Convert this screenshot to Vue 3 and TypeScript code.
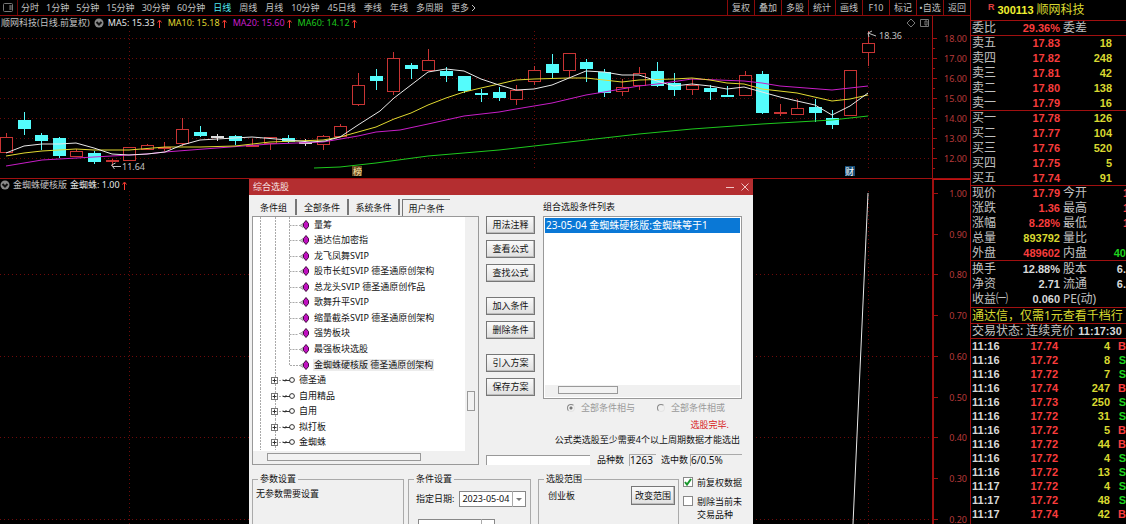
<script setup lang="ts">
import { ref } from 'vue'

type Kind = 'up' | 'down' | 'flat'
type Candle = [x: number, high: number, top: number, bottom: number, low: number, kind: Kind]

const intraday = ['分时', '1分钟', '5分钟', '15分钟', '30分钟', '60分钟']
const periods = ['日线', '周线', '月线', '10分钟', '45日线', '季线', '年线', '多周期']
const tools = ['复权', '叠加', '多股', '统计', '画线', 'F10', '标记', '•自选', '返回']

const averages = [
  { name: 'MA5: 15.33', cls: 'ma5' },
  { name: 'MA10: 15.18', cls: 'ma10' },
  { name: 'MA20: 15.60', cls: 'ma20' },
  { name: 'MA60: 14.12', cls: 'ma60' },
]

const candles: Candle[] = [
  [6, 133, 137, 153, 153, 'up'], [24, 112, 120, 129, 135, 'down'], [41, 133, 135, 141, 150, 'down'],
  [59, 137, 138, 156, 158, 'down'], [76, 149, 151, 157, 157, 'up'], [94, 151, 153, 162, 164, 'down'],
  [112, 159, 160, 161, 166, 'up'], [129, 147, 147, 161, 161, 'up'], [147, 144, 145, 150, 150, 'up'],
  [164, 142, 147, 148, 151, 'up'], [182, 118, 129, 144, 146, 'up'], [200, 126, 132, 136, 137, 'down'],
  [217, 134, 136, 137, 141, 'flat'], [235, 135, 136, 141, 145, 'down'], [252, 139, 145, 146, 146, 'up'],
  [270, 137, 137, 144, 150, 'up'], [288, 135, 138, 142, 143, 'down'], [305, 139, 142, 142, 146, 'flat'],
  [323, 135, 136, 145, 150, 'up'], [340, 124, 126, 137, 137, 'up'], [358, 73, 85, 105, 106, 'up'],
  [376, 69, 76, 81, 90, 'down'], [393, 52, 58, 92, 95, 'up'], [411, 63, 65, 69, 79, 'down'],
  [428, 49, 60, 71, 71, 'up'], [446, 67, 71, 76, 82, 'down'], [464, 76, 76, 91, 93, 'down'],
  [481, 89, 93, 95, 102, 'down'], [499, 87, 92, 98, 101, 'down'], [516, 85, 90, 100, 105, 'up'],
  [534, 66, 70, 82, 85, 'up'], [552, 54, 64, 73, 78, 'down'], [569, 53, 53, 71, 77, 'up'],
  [586, 59, 62, 69, 82, 'down'], [604, 69, 72, 93, 97, 'down'], [622, 79, 87, 92, 96, 'up'],
  [639, 67, 73, 86, 90, 'up'], [657, 62, 71, 86, 87, 'down'], [674, 73, 83, 90, 96, 'down'],
  [692, 79, 85, 90, 95, 'up'], [710, 85, 88, 92, 100, 'down'], [727, 86, 95, 96, 97, 'down'],
  [745, 71, 75, 96, 96, 'up'], [762, 71, 74, 113, 114, 'down'], [780, 104, 112, 114, 116, 'up'],
  [797, 99, 108, 115, 115, 'up'], [815, 99, 107, 113, 122, 'down'], [832, 110, 118, 125, 129, 'down'],
  [850, 70, 70, 116, 116, 'up'], [868, 31, 43, 53, 66, 'up'],
]

const lines = [
  { cls: 'ma20', pts: '6,166 24,163 42,160 94,157 147,154 165,152 217,148 270,144 323,142 358,136 376,132 400,130 428,124 464,116 499,112 516,109 552,103 586,95 604,92 639,86 657,84 692,79 744,81 762,83 780,86 832,90 868,86' },
  { cls: 'ma60', pts: '314,168 340,167 358,165 376,163 428,156 499,150 569,142 639,134 692,129 762,124 832,120 850,118 868,116' },
  { cls: 'ma10', pts: '6,156 24,153 42,151 76,149 94,150 129,150 165,147 200,147 235,146 270,142 323,140 340,137 358,132 376,127 394,119 411,113 428,105 446,98 464,92 481,88 499,84 516,80 534,79 569,78 586,78 604,80 622,82 639,80 674,79 692,78 710,80 727,83 744,84 762,89 797,93 832,101 850,99 868,95' },
  { cls: 'ma5', pts: '6,153 24,146 42,144 59,144 76,143 94,148 112,154 129,155 147,154 165,152 182,145 200,140 217,139 252,137 288,140 310,142 325,141 340,137 358,125 380,111 394,98 411,85 428,72 446,69 464,71 481,79 499,85 516,90 534,89 552,85 569,78 586,71 604,72 622,75 639,75 657,81 674,86 692,84 710,86 727,89 744,87 762,92 780,97 797,101 815,105 832,115 850,106 868,93' },
]

const priceAxis: [number, string][] = [
  [38, '18.00'], [58, '17.00'], [78, '16.00'], [98, '15.00'], [118, '14.00'], [138, '13.00'], [158, '12.00'],
]
const signalAxis: [number, string][] = [
  [193, '1.00'], [234, '0.90'], [274, '0.80'], [315, '0.70'], [356, '0.60'], [397, '0.50'], [437, '0.40'], [478, '0.30'], [519, '0.20'],
]
const signalGrid = signalAxis.filter((_, i) => i > 0 && i % 2 === 0)
const verticals = [129, 534, 868]

const sells = [['卖五', '17.83', '18'], ['卖四', '17.82', '248'], ['卖三', '17.81', '42'], ['卖二', '17.80', '138'], ['卖一', '17.79', '16']]
const buys = [['买一', '17.78', '126'], ['买二', '17.77', '104'], ['买三', '17.76', '520'], ['买四', '17.75', '5'], ['买五', '17.74', '91']]
const quotes = [
  ['现价', '17.79', 'red', '今开', '1', 'red cut'],
  ['涨跌', '1.36', 'red', '最高', '1', 'red cut'],
  ['涨幅', '8.28%', 'red', '最低', '1', 'red cut'],
  ['总量', '893792', 'yellow', '量比', '', ''],
  ['外盘', '489602', 'red', '内盘', '40', 'green'],
]
const basics = [
  ['换手', '12.88%', 'white', '股本', '6.', 'white'],
  ['净资', '2.71', 'white', '流通', '6.', 'white'],
  ['收益㈠', '0.060', 'white', 'PE(动)', '', ''],
]
const ticks = [
  ['11:16', '17.74', '4', 'B'], ['11:16', '17.72', '8', 'S'], ['11:16', '17.72', '7', 'S'], ['11:16', '17.74', '247', 'B'],
  ['11:16', '17.73', '250', 'S'], ['11:16', '17.72', '31', 'S'], ['11:16', '17.72', '5', 'B'], ['11:16', '17.72', '44', 'B'],
  ['11:16', '17.72', '4', 'S'], ['11:16', '17.72', '13', 'S'], ['11:17', '17.72', '4', 'S'], ['11:17', '17.72', '48', 'S'],
  ['11:17', '17.74', '42', 'B'],
]

const tabs = ['条件组', '全部条件', '系统条件', '用户条件']
const activeTab = ref('用户条件')
const leaves = [
  '量筹', '通达信加密指', '龙飞凤舞SVIP', '股市长虹SVIP 德圣通原创架构', '总龙头SVIP 德圣通原创作品',
  '歌舞升平SVIP', '缩量截杀SVIP 德圣通原创架构', '强势板块', '最强板块选股', '金蜘蛛硬核版 德圣通原创架构',
]
const selectedLeaf = ref('金蜘蛛硬核版 德圣通原创架构')
const folders = ['德圣通', '自用精品', '自用', '拟打板', '金蜘蛛']
const actionGroups = [['用法注释', '查看公式', '查找公式'], ['加入条件', '删除条件'], ['引入方案', '保存方案']]
const adjusted = ref(true)
const excluded = ref(false)
</script>

<template>
  <div class="app">
    <main class="main">
      <nav class="toolbar">
        <button class="panel-btn" aria-label="侧栏">
          <svg width="11" height="10" viewBox="0 0 11 10"><rect x="0.5" y="0.5" width="9" height="8" rx="1" /><path d="M7 2v5M8 2v5" /></svg>
        </button>
        <div class="group tight">
          <button v-for="p in intraday" :key="p">{{ p }}</button>
        </div>
        <div class="group">
          <button v-for="p in periods" :key="p" :class="{ current: p === '日线' }">{{ p }}</button>
          <button class="more">更多
            <svg width="5" height="8" viewBox="0 0 5 8"><path d="M1 1l3 3-3 3" /></svg>
          </button>
        </div>
        <div class="tools">
          <button v-for="t in tools" :key="t">{{ t }}</button>
        </div>
      </nav>

      <section class="panel price">
        <div class="plot">
          <header class="info">
            <span>顺网科技(日线.前复权)</span>
            <svg class="drop" width="10" height="10" viewBox="0 0 10 10"><circle cx="5" cy="5" r="4.5" /><path d="M2.500 4l2.500 2.500L7.500 4" /></svg>
            <span v-for="m in averages" :key="m.name" class="avg" :class="m.cls">{{ m.name
              }}<svg class="rise" width="5" height="9" viewBox="0 0 5 9"><path d="M2.500 9V2M0.500 3.500L2.500 1l2 2.500" /></svg></span>
            <span class="corner">
              <svg width="24" height="10" viewBox="0 0 24 10"><path d="M5 1l4 4-4 4-4-4zM14.500 1.500h8v7h-8z" /><path d="M19 3h2v4h-2z" /></svg>
            </span>
          </header>
          <svg class="canvas" width="100%" height="147">
            <g transform="translate(0 -31)">
              <g class="grid">
                <line v-for="[y] in priceAxis" :key="y" x1="0" :y1="y + 0.5" x2="100%" :y2="y + 0.5" />
                <line v-for="x in verticals" :key="x" :x1="x + 0.5" y1="31" :x2="x + 0.5" y2="168" />
              </g>
              <g v-for="[x, hi, top, bot, lo, kind] in candles" :key="x" class="candle" :class="kind">
                <line :x1="x + 0.5" :y1="hi" :x2="x + 0.5" :y2="top" />
                <line :x1="x + 0.5" :y1="bot" :x2="x + 0.5" :y2="lo" />
                <rect :x="x - 5.5" :y="top + 0.5" width="12" :height="Math.max(bot - top - 1, 1)" />
              </g>
              <polyline v-for="l in lines" :key="l.cls" class="line" :class="l.cls" :points="l.pts" />
              <path class="mark" d="M121 166.500h-8M115.500 163l-4 2 3 4" />
              <text x="122" y="170">11.64</text>
              <path class="mark" d="M876 36l-8-3M872 31l-4 2 1 4" />
              <text x="879" y="39">18.36</text>
              <rect x="352" y="166" width="10" height="10" fill="#6a4a20" />
              <text x="353" y="175" class="badge gold">榜</text>
              <rect x="845" y="166" width="10" height="10" fill="#164e78" />
              <text x="845" y="175" class="badge">财</text>
            </g>
          </svg>
        </div>
        <svg class="axis" width="38" height="162">
          <g transform="translate(0 -16)">
            <template v-for="[y, label] in priceAxis" :key="y">
              <path :d="`M0 ${y + 0.5}h4M0 ${y + 10.5}h2`" />
              <text x="34" :y="y + 4">{{ label }}</text>
            </template>
          </g>
        </svg>
      </section>

      <section class="panel signal">
        <div class="plot">
          <header class="info">
            <svg class="drop" width="10" height="10" viewBox="0 0 10 10"><circle cx="5" cy="5" r="4.5" /><path d="M2.500 4l2.500 2.500L7.500 4" /></svg>
            <span>金蜘蛛硬核版</span>
            <span class="avg ma5">金蜘蛛: 1.00<svg class="rise" width="5" height="9" viewBox="0 0 5 9"><path d="M2.500 9V2M0.500 3.500L2.500 1l2 2.500" /></svg></span>
          </header>
          <svg class="canvas" width="100%" height="333">
            <g transform="translate(0 -191)">
              <g class="grid">
                <line v-for="[y] in signalGrid" :key="y" x1="0" :y1="y + 0.5" x2="100%" :y2="y + 0.5" />
                <line v-for="x in verticals" :key="x" :x1="x + 0.5" y1="191" :x2="x + 0.5" y2="524" />
              </g>
              <polyline class="line ma5" points="853,524 868,193" />
            </g>
          </svg>
        </div>
        <svg class="axis" width="38" height="345">
          <g transform="translate(0 -180)">
            <template v-for="[y, label] in signalAxis" :key="y">
              <path :d="`M0 ${y + 0.5}h4`" />
              <text x="33" :y="y + 4">{{ label }}</text>
            </template>
          </g>
        </svg>
      </section>
    </main>

    <aside class="side">
      <h1 class="stock"><sup>R</sup><b>300113</b><span>顺网科技</span></h1>
      <div class="block one">
        <div class="quote"><span>委比</span><b class="red">29.36%</b><span>委差</span></div>
      </div>
      <div v-for="(book, i) in [sells, buys]" :key="i" class="block five">
        <div v-for="r in book" :key="r[0]" class="quote book">
          <span>{{ r[0] }}</span><b class="red">{{ r[1] }}</b><b class="yellow">{{ r[2] }}</b>
        </div>
      </div>
      <div class="block five">
        <div v-for="r in quotes" :key="r[0]" class="quote">
          <span>{{ r[0] }}</span><b :class="r[2]">{{ r[1] }}</b><span>{{ r[3] }}</span><b :class="r[5]">{{ r[4] }}</b>
        </div>
      </div>
      <div class="block three">
        <div v-for="r in basics" :key="r[0]" class="quote">
          <span>{{ r[0] }}</span><b :class="r[2]">{{ r[1] }}</b><span>{{ r[3] }}</span><b :class="r[5]">{{ r[4] }}</b>
        </div>
      </div>
      <a class="block promo" href="#">通达信，仅需1元查看千档行</a>
      <p class="block state">交易状态: 连续竞价 <b>11:17:30</b></p>
      <table class="ticks">
        <tbody>
          <tr v-for="(t, i) in ticks" :key="i">
            <td class="white">{{ t[0] }}</td>
            <td class="red">{{ t[1] }}</td>
            <td class="yellow">{{ t[2] }}</td>
            <td :class="t[3] === 'B' ? 'red' : 'green'">{{ t[3] }}</td>
          </tr>
        </tbody>
      </table>
    </aside>

    <div class="dialog" role="dialog" aria-labelledby="dialog-title">
      <header class="title">
        <h2 id="dialog-title">综合选股</h2>
        <button aria-label="最小化"><svg width="8" height="8" viewBox="0 0 8 8"><path d="M0 4.500h8" /></svg></button>
        <button aria-label="关闭"><svg width="8" height="8" viewBox="0 0 8 8"><path d="M0.500 0.500l7 7M7.500 0.500l-7 7" /></svg></button>
      </header>

      <div class="upper">
        <div class="picker">
          <div class="tabs" role="tablist">
            <button v-for="t in tabs" :key="t" role="tab" :aria-selected="t === activeTab" :class="{ active: t === activeTab }" @click="activeTab = t">{{ t }}</button>
          </div>
          <div class="tree-box">
            <ul class="tree">
              <li v-for="l in leaves" :key="l" class="leaf" @click="selectedLeaf = l">
                <svg width="48" height="16" viewBox="0 0 48 16">
                  <path class="dots" :d="l === leaves[9] ? 'M7.500 0v16M22.500 0v16M36.500 0v8.500h9' : 'M7.500 0v16M22.500 0v16M36.500 0v16M36.500 8.500h9'" />
                </svg>
                <svg width="12" height="10" viewBox="0 0 12 10">
                  <path class="stub" d="M-2 5.500h2M-1 5.500l3-2v4z" />
                  <path class="gem" d="M5 0.500l2.500 3v3L5 9.500l-2.500-3v-3z" />
                </svg>
                <span :class="{ selected: l === selectedLeaf }">{{ l }}</span>
              </li>
              <li v-for="f in folders" :key="f" class="folder">
                <svg width="43" height="16" viewBox="0 0 43 16">
                  <path class="dots" d="M7.500 0v16M22.500 0v16M26 8.500h5" />
                  <rect class="box" x="18.500" y="5.500" width="6" height="6" />
                  <path class="plus" d="M19.500 8.500h4M21.500 6.500v4" />
                  <path class="key" d="M30 8.500h7M30 7.500l2 2M33 7v2" />
                  <circle class="key" cx="39" cy="8" r="2.400" />
                </svg>
                <span>{{ f }}</span>
              </li>
            </ul>
            <div class="vbar"><i></i></div>
            <div class="hbar"><i></i></div>
          </div>
        </div>

        <div class="compose">
          <div class="compose-row">
            <div class="actions">
              <div v-for="(g, i) in actionGroups" :key="i">
                <button v-for="a in g" :key="a" class="btn">{{ a }}</button>
              </div>
            </div>
            <div class="conditions">
              <h3>组合选股条件列表</h3>
              <div class="listbox">
                <div class="item">23-05-04 金蜘蛛硬核版:金蜘蛛等于1</div>
                <div class="list-bar"><i></i></div>
              </div>
              <div class="radios">
                <label><input type="radio" name="join" checked disabled />全部条件相与</label>
                <label><input type="radio" name="join" disabled />全部条件相或</label>
              </div>
              <p class="done">选股完毕.</p>
              <p class="hint">公式类选股至少需要4个以上周期数据才能选出</p>
            </div>
          </div>
          <div class="counts">
            <div class="progress"></div>
            <span>品种数</span><output>1263</output>
            <span>选中数</span><output class="wide">6/0.5%</output>
          </div>
        </div>
      </div>

      <div class="lower">
        <fieldset class="params">
          <legend>参数设置</legend>
          <p>无参数需要设置</p>
        </fieldset>
        <fieldset class="setup">
          <legend>条件设置</legend>
          <div class="date">
            <label for="date">指定日期:</label>
            <span class="combo"><select id="date"><option>2023-05-04</option></select></span>
          </div>
          <span class="combo period"><select aria-label="周期"><option></option></select></span>
        </fieldset>
        <fieldset class="range">
          <legend>选股范围</legend>
          <div><span>创业板</span><button class="btn">改变范围</button></div>
        </fieldset>
        <div class="checks">
          <label><input v-model="adjusted" type="checkbox" /><svg width="10" height="10" viewBox="0 0 10 10"><path v-if="adjusted" d="M2 5l2 2.500L8 2" /></svg><span>前复权数据</span></label>
          <label><input v-model="excluded" type="checkbox" /><svg width="10" height="10" viewBox="0 0 10 10"><path v-if="excluded" d="M2 5l2 2.500L8 2" /></svg><span>剔除当前未<br />交易品种</span></label>
        </div>
      </div>
    </div>
  </div>
</template>

<style>
body {
  margin: 0;
  background: #000;
}
</style>

<style scoped>
* {
  box-sizing: border-box;
}
.app {
  position: relative;
  display: flex;
  height: 100vh;
  overflow: hidden;
  background: #000;
  color: #c0c0c0;
  font: 9px/12px "Noto Sans", "Noto Sans CJK SC", sans-serif;
  white-space: nowrap;
}
button {
  padding: 0;
  border: 0;
  background: none;
  color: inherit;
  font: inherit;
}
h1, h2, h3, p, ul {
  margin: 0;
  padding: 0;
  font-weight: 400;
  font-size: inherit;
  list-style: none;
}
svg {
  display: block;
  flex: none;
}
.main {
  flex: 1;
  min-width: 0;
  display: flex;
  flex-direction: column;
}
.toolbar {
  display: flex;
  height: 16px;
  border-bottom: 1px solid #8c0a0a;
}
.panel-btn {
  width: 18px;
  padding-left: 3px;
  border-right: 1px solid #6a0808;
}
.panel-btn svg {
  fill: none;
  stroke: #777;
}
.group {
  display: flex;
  gap: 8px;
  margin-left: 8px;
}
.group.tight {
  gap: 7px;
  margin-left: 3px;
}
.current {
  color: #4fe6f0;
}
.more {
  display: flex;
  align-items: center;
  gap: 2px;
}
.more svg {
  fill: none;
  stroke: #c0c0c0;
}
.tools {
  display: flex;
  margin-left: auto;
}
.tools button {
  width: 27px;
  border-left: 1px solid #8c0a0a;
}
.panel {
  display: flex;
}
.price {
  height: 163px;
  border-bottom: 1px solid #a01010;
}
.signal {
  flex: 1;
}
.plot {
  flex: 1;
  min-width: 0;
}
.info {
  display: flex;
  align-items: center;
  gap: 4px;
  height: 14px;
  margin-bottom: 1px;
  padding-left: 1px;
}
.signal .info {
  height: 12px;
  margin-bottom: 0;
  gap: 3px;
  padding-left: 0;
}
.drop circle {
  fill: #8a8a8a;
}
.drop path {
  fill: none;
  stroke: #111;
  stroke-width: 2;
}
.avg {
  display: flex;
  align-items: center;
  gap: 2px;
  margin-right: 2px;
}
.rise {
  fill: none;
  stroke: #ff3c32;
}
.corner {
  margin-left: auto;
  margin-right: 2px;
}
.corner path {
  fill: none;
  stroke: #777;
}
.ma5 { color: #e8e8e8; stroke: #e8e8e8; }
.ma10 { color: #e0d830; stroke: #e0d830; }
.ma20 { color: #c81ec8; stroke: #c81ec8; }
.ma60 { color: #1ec81e; stroke: #1ec81e; }
.avg .rise {
  stroke: #ff3c32;
}
.canvas {
  overflow: visible;
}
.canvas text {
  stroke: none;
  fill: #c0c0c0;
}
.line {
  fill: none;
  stroke-width: 1;
}
.grid line {
  stroke: #6e0a0a;
  stroke-dasharray: 1 3;
}
.candle {
  shape-rendering: crispEdges;
}
.up { stroke: #c83434; fill: #000; }
.down { stroke: #54fcfc; fill: #54fcfc; }
.flat { stroke: #ddd; fill: none; }
.mark {
  fill: none;
  stroke: #c0c0c0;
}
.canvas .badge {
  fill: #fff;
}
.canvas .gold {
  fill: #ffe9a8;
}
.axis {
  border-left: 1px solid #a01010;
}
.signal .axis {
  border-top: 1px solid #c01010;
  border-left: 2px solid #a01010;
}
.axis text {
  fill: #b83a3a;
  text-anchor: end;
}
.axis path {
  stroke: #a01010;
}

.side {
  flex: none;
  width: 156px;
  border-left: 1px solid #a01010;
  overflow: hidden;
  font-size: 12px;
  line-height: 14px;
}
.side b,
.ticks {
  font: bold 11px/14px "Liberation Sans", sans-serif;
}
.side .red { color: #f83c3c; }
.side .yellow { color: #d8d830; }
.side .green { color: #1ed21e; }
.side .white { color: #d8d8d8; }
.stock {
  display: flex;
  align-items: center;
  height: 20px;
  padding-left: 17px;
  gap: 3px;
  color: #d8d830;
  font-size: 12px;
}
.stock b {
  color: #f0f030;
}
.stock sup {
  align-self: flex-start;
  color: #e04040;
  font: bold 9px/14px "Liberation Sans", sans-serif;
}
.block {
  display: grid;
  grid-auto-rows: 1fr;
  border-top: 1px solid #a01010;
  padding-left: 1px;
}
.one { height: 15px; }
.five { height: 75px; }
.three { height: 47px; }
.quote {
  display: grid;
  grid-template-columns: 24px 64px 36px 1fr;
  align-items: center;
}
.quote b {
  text-align: right;
}
.quote span:nth-child(3) {
  padding-left: 3px;
}
.quote.book {
  grid-template-columns: 24px 64px 52px;
}
.quote .cut {
  margin-right: -3px;
}
.promo {
  height: 16px;
  align-items: center;
  color: #d8d830;
  text-decoration: none;
}
.state {
  display: flex;
  align-items: center;
  gap: 4px;
  height: 16px;
  border-bottom: 1px solid #a01010;
}
.state b {
  color: #d8d8d8;
}
.ticks {
  width: 100%;
  border-collapse: collapse;
  table-layout: fixed;
}
.ticks td {
  height: 14px;
  padding: 0;
  text-align: right;
}
.ticks td:first-child {
  width: 32px;
  padding-left: 1px;
  text-align: left;
}
.ticks td:nth-child(2) { width: 55px; }
.ticks td:nth-child(3) { width: 52px; }

.dialog {
  position: absolute;
  left: 249px;
  top: 179px;
  bottom: 0;
  width: 504px;
  overflow: hidden;
  background: #f0f0f0;
  color: #111;
}
.title {
  display: flex;
  align-items: center;
  gap: 7px;
  height: 16px;
  padding: 0 4px 1px;
  background: #b42e30;
  color: #f6e4e4;
}
.title h2 {
  flex: 1;
}
.title svg {
  fill: none;
  stroke: #f0c4c4;
}
.upper {
  display: flex;
  gap: 7px;
  padding: 4px 11px 0 3px;
}
.picker {
  width: 227px;
}
.tabs {
  display: flex;
  height: 17px;
}
.tabs button {
  width: 52px;
  height: 16px;
  padding-top: 2px;
  border-right: 2px solid #777;
}
.tabs button:first-child {
  width: 45px;
}
.tabs button:nth-child(3) {
  width: 51px;
}
.tabs .active {
  width: 48px;
  height: 17px;
  margin-left: 2px;
  border: 1px solid #777;
  border-width: 1px 0 0 1px;
}
.tree-box {
  display: grid;
  grid-template-columns: 1fr 13px;
  border: 1px solid #999;
}
.tree {
  display: grid;
  grid-auto-rows: 1fr;
  height: 234px;
  padding-bottom: 1px;
  background: #fff;
}
.tree li {
  display: flex;
  align-items: center;
  overflow: hidden;
}
.leaf svg {
  overflow: visible;
}
.leaf span {
  padding: 0 1px;
}
.leaf .selected {
  background: #ececec;
}
.folder span {
  margin-left: 3px;
}
.dots {
  fill: none;
  stroke: #aaa;
  stroke-dasharray: 2 1;
}
.stub {
  fill: #ccc;
  stroke: #aaa;
}
.gem {
  fill: #c010c0;
  stroke: #40083c;
}
.box {
  fill: #fff;
  stroke: #777;
}
.plus,
.key {
  fill: none;
  stroke: #333;
}
.vbar i,
.hbar i,
.list-bar i {
  display: block;
  border: 1px solid #999;
  background: #f2f2f2;
}
.vbar {
  padding: 174px 3px 0 2px;
}
.vbar i {
  height: 20px;
}
.hbar {
  grid-column: 1 / 3;
  height: 13px;
  padding: 2px 0 0 14px;
}
.hbar i {
  width: 154px;
  height: 8px;
}
.compose {
  flex: 1;
}
.compose-row {
  display: flex;
  gap: 8px;
}
.actions {
  display: flex;
  flex-direction: column;
  gap: 15px;
  width: 49px;
  padding-top: 17px;
}
.actions div {
  display: flex;
  flex-direction: column;
  gap: 6px;
}
.btn {
  height: 18px;
  border: 1px solid #777;
  box-shadow: inset -1px -1px #bbb;
  background: linear-gradient(#fafafa, #e0e0e0);
}
.conditions {
  flex: 1;
}
.conditions h3 {
  height: 17px;
  line-height: 15px;
}
.listbox {
  display: flex;
  flex-direction: column;
  height: 183px;
  border: 1px solid #999;
  padding: 1px;
  background: #fff;
}
.item {
  height: 15px;
  padding-left: 1px;
  background: #0a78d6;
  color: #fff;
  font-size: 10px;
  line-height: 15px;
}
.list-bar {
  height: 12px;
  margin-top: auto;
  padding: 1px 0 0 13px;
  background: #f0f0f0;
}
.list-bar i {
  width: 60px;
  height: 8px;
}
.radios {
  display: flex;
  gap: 22px;
  padding: 3px 0 0 24px;
  color: #999;
}
.radios label {
  display: flex;
  align-items: center;
  gap: 6px;
}
.radios input {
  appearance: none;
  width: 8px;
  height: 8px;
  margin: 0;
  border: 1px solid #888;
  border-right-color: #e4e4e4;
  border-bottom-color: #e4e4e4;
  border-radius: 50%;
}
.radios input:checked {
  background: radial-gradient(#777 1px, #f0f0f0 2px);
}
.done {
  margin-top: 5px;
  padding-right: 13px;
  color: #d81c1c;
  text-align: right;
}
.hint {
  margin-top: 3px;
  padding-right: 2px;
  text-align: right;
}
.counts {
  display: flex;
  align-items: center;
  margin-top: 8px;
}
.progress {
  width: 104px;
  height: 10px;
  margin-right: 7px;
  border: 1px solid #999;
  border-width: 1px 0 0 1px;
  background: #fff;
}
.counts output {
  width: 27px;
  height: 12px;
  margin: 0 5px;
  border: 1px solid #aaa;
  border-width: 1px 0 0 1px;
  font-size: 10px;
  line-height: 10px;
}
.counts .wide {
  flex: 1;
  margin: 0 0 0 2px;
}
.lower {
  display: flex;
  padding: 6px 10px 0 3px;
}
fieldset {
  min-width: 0;
  height: 64px;
  margin: 0 4px 0 0;
  padding: 0 3px;
  border: 1px solid #aaa;
}
legend {
  margin-left: 2px;
  padding: 0 2px;
  line-height: 14px;
}
.params {
  width: 152px;
}
.params p {
  padding-top: 2px;
}
.setup {
  width: 123px;
}
.setup .date {
  display: flex;
  align-items: center;
  gap: 5px;
  padding: 5px 0 0 4px;
}
.combo {
  position: relative;
  display: block;
  width: 67px;
}
.combo select {
  appearance: none;
  display: block;
  width: 100%;
  height: 16px;
  padding: 0 0 0 2px;
  border: 1px solid #888;
  border-radius: 0;
  background: #fff;
  color: #111;
  font: inherit;
}
.combo::before {
  content: "";
  position: absolute;
  right: 13px;
  top: 0;
  bottom: 0;
  border-left: 1px solid #aaa;
}
.combo::after {
  content: "";
  position: absolute;
  right: 4px;
  top: 7px;
  border: 3px solid transparent;
  border-top-color: #777;
}
.combo.period {
  width: 77px;
  margin: 12px 0 0 6px;
}
.range {
  width: 141px;
  margin-left: 3px;
}
.range div {
  display: flex;
  justify-content: space-between;
  align-items: center;
  padding-left: 6px;
}
.range .btn {
  width: 44px;
  height: 19px;
}
.checks {
  display: flex;
  flex-direction: column;
  gap: 6px;
  padding-top: 4px;
}
.checks label {
  display: grid;
  grid-template-columns: 10px 1fr;
  column-gap: 4px;
  line-height: 13px;
}
.checks input {
  appearance: none;
  grid-area: 1 / 1;
  width: 10px;
  height: 10px;
  margin: 1px 0 0;
  border: 1px solid #888;
  background: #fff;
}
.checks svg {
  grid-area: 1 / 1;
  margin-top: 1px;
  fill: none;
  stroke: #18962c;
  stroke-width: 2;
  pointer-events: none;
}
</style>
